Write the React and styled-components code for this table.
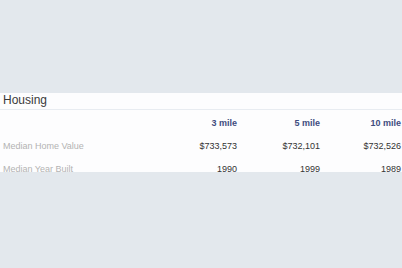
import { Fragment } from 'react';
import styled, { createGlobalStyle } from 'styled-components';

const GlobalStyle = createGlobalStyle`
  html, body {
    margin: 0;
    padding: 0;
    background: #e3e8ed;
    font-family: 'Liberation Sans', Arial, sans-serif;
  }
`;

const Page = styled.div`
  padding-top: 93px;
  height: 268px;
  box-sizing: border-box;
`;

const Panel = styled.section`
  background: #fdfdfe;
  height: 79px;
  overflow: hidden;
`;

const Title = styled.h2`
  margin: 0;
  height: 16px;
  padding-left: 3px;
  font-size: 12px;
  font-weight: normal;
  line-height: 15px;
  color: #3a3a3a;
  border-bottom: 1px solid #e8ecf1;
`;

const Table = styled.div`
  display: grid;
  grid-template-columns: 155px 82px 83px 81px;
  padding-top: 2px;
`;

const Cell = styled.div`
  height: 23px;
  line-height: 23px;
  font-size: 9px;
  text-align: ${p => (p.$label ? 'left' : 'right')};
  padding-left: ${p => (p.$label ? '3px' : '0')};
  color: ${p => (p.$label ? '#b3b3b3' : '#333')};
  white-space: nowrap;
`;

const HeadCell = styled(Cell)`
  font-weight: bold;
  color: #3f4c7e;
`;

const miles = ['3 mile', '5 mile', '10 mile'];

const rows = [
  { label: 'Median Home Value', values: ['$733,573', '$732,101', '$732,526'] },
  { label: 'Median Year Built', values: ['1990', '1999', '1989'] },
];

export default function App() {
  return (
    <>
      <GlobalStyle />
      <Page>
        <Panel>
          <Title>Housing</Title>
          <Table>
            <HeadCell $label />
            {miles.map(m => (
              <HeadCell key={m}>{m}</HeadCell>
            ))}
            {rows.map(row => (
              <Fragment key={row.label}>
                <Cell $label>{row.label}</Cell>
                {row.values.map((v, i) => (
                  <Cell key={i}>{v}</Cell>
                ))}
              </Fragment>
            ))}
          </Table>
        </Panel>
      </Page>
    </>
  );
}
